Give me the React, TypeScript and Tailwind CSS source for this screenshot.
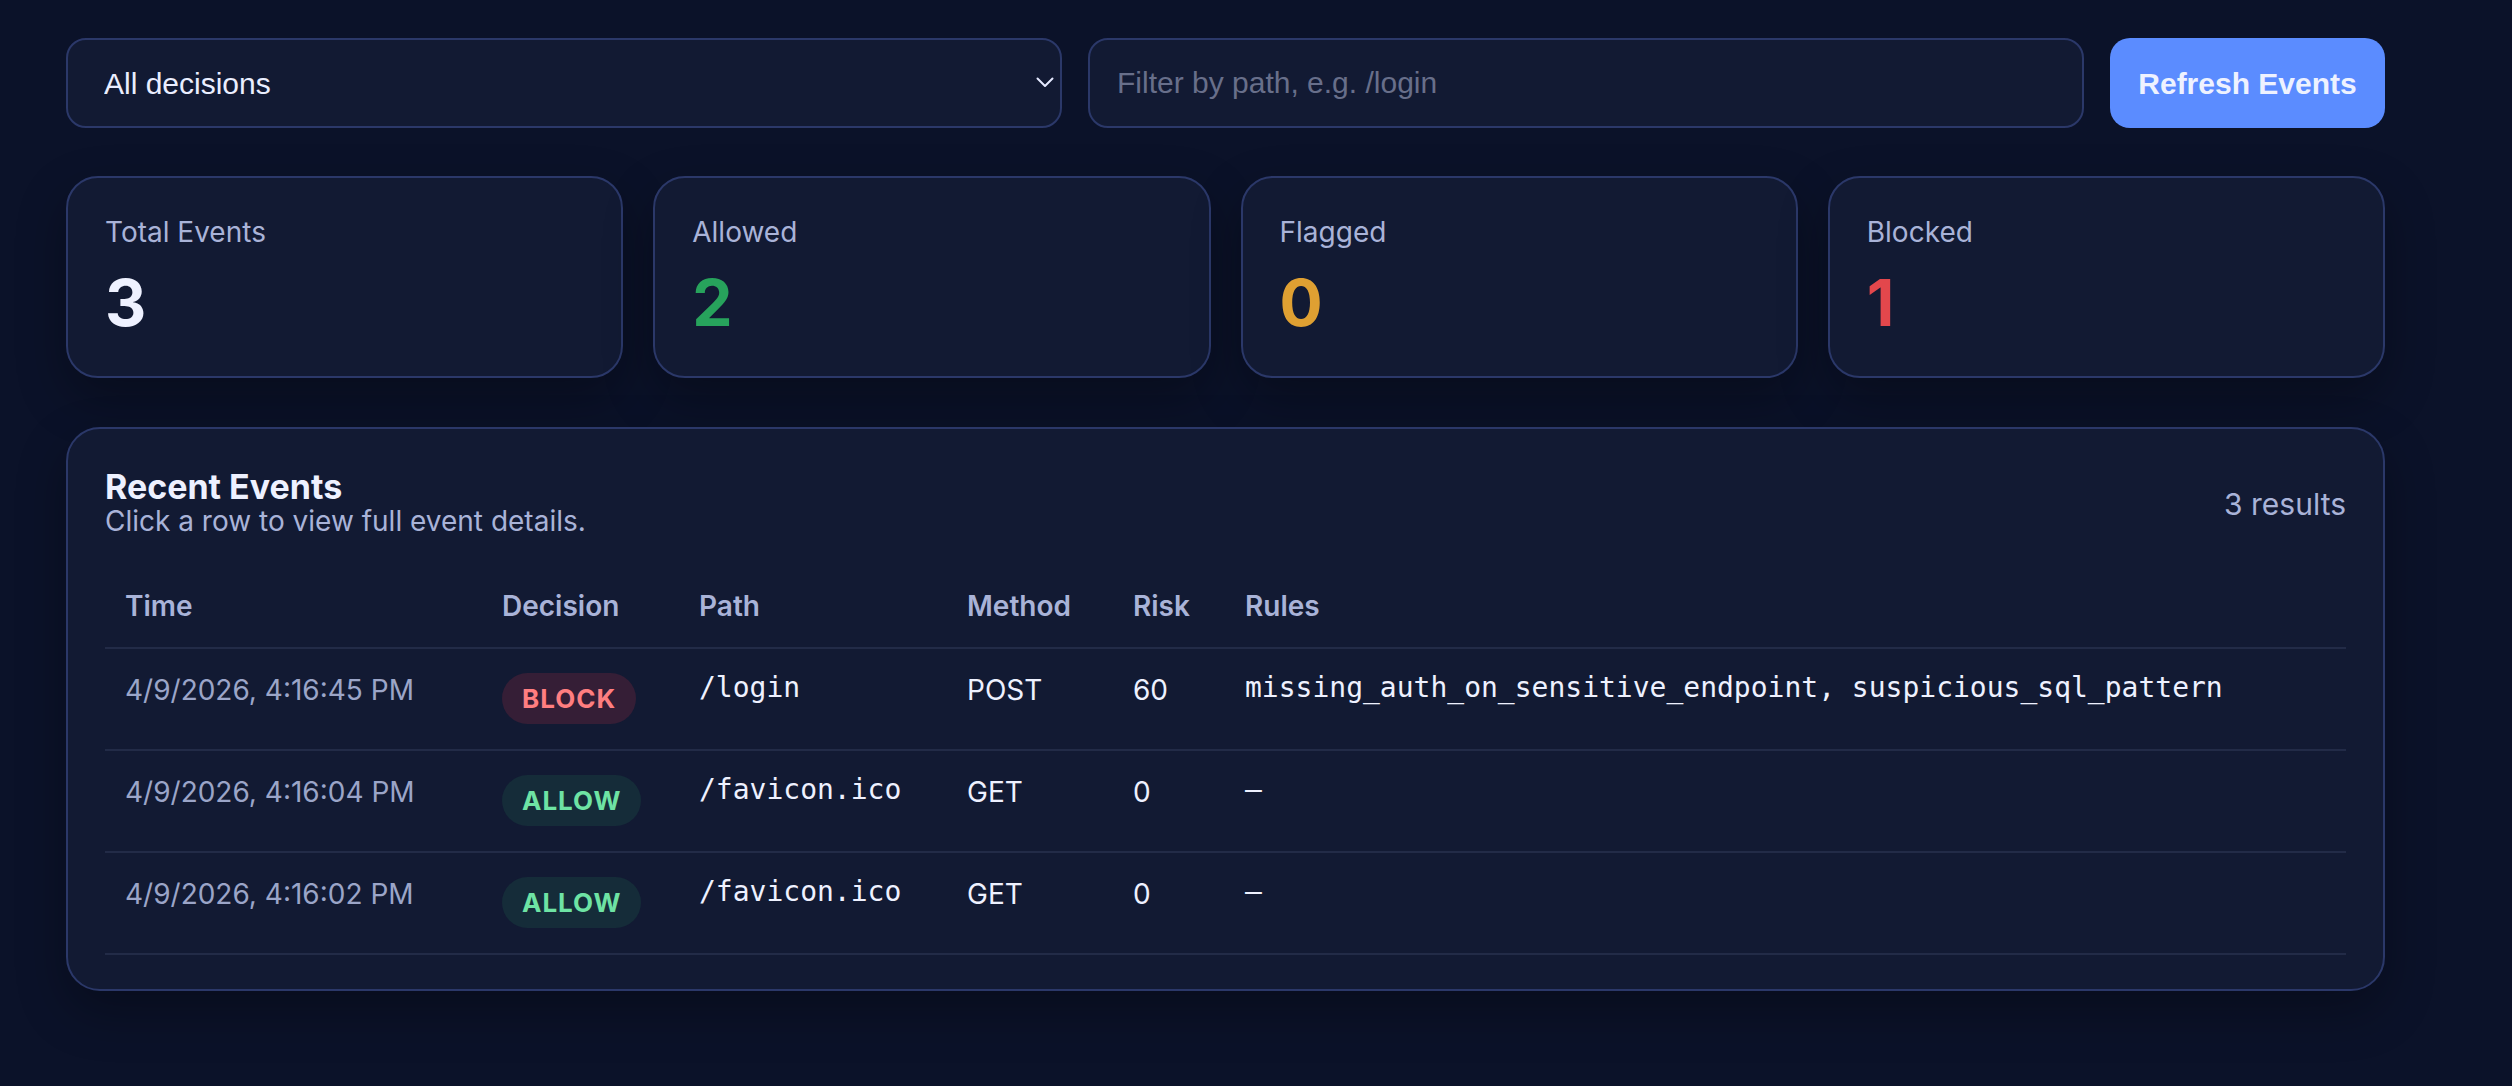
import { useState } from "react";

type Decision = "BLOCK" | "ALLOW" | "FLAG";

const events: {
  id: number;
  time: string;
  decision: Decision;
  path: string;
  method: string;
  risk: number;
  rules: string[];
}[] = [
  {
    id: 1,
    time: "4/9/2026, 4:16:45 PM",
    decision: "BLOCK",
    path: "/login",
    method: "POST",
    risk: 60,
    rules: ["missing_auth_on_sensitive_endpoint", "suspicious_sql_pattern"],
  },
  {
    id: 2,
    time: "4/9/2026, 4:16:04 PM",
    decision: "ALLOW",
    path: "/favicon.ico",
    method: "GET",
    risk: 0,
    rules: [],
  },
  {
    id: 3,
    time: "4/9/2026, 4:16:02 PM",
    decision: "ALLOW",
    path: "/favicon.ico",
    method: "GET",
    risk: 0,
    rules: [],
  },
];

const stats = [
  { label: "Total Events", value: 3, color: "text-[#eef1ff]" },
  { label: "Allowed", value: 2, color: "text-[#27a35c]" },
  { label: "Flagged", value: 0, color: "text-[#dfa032]" },
  { label: "Blocked", value: 1, color: "text-[#e3474c]" },
];

const badgeStyles: Record<Decision, string> = {
  BLOCK: "bg-[#351e36] text-[#ff7e80]",
  ALLOW: "bg-[#152c39] text-[#6ee3a4]",
  FLAG: "bg-[#33291c] text-[#f3c052]",
};

const mono = "font-['DejaVu_Sans_Mono',monospace]";

export default function App() {
  const [decision, setDecision] = useState("all");
  const [pathFilter, setPathFilter] = useState("");

  return (
    <div className="min-h-screen bg-[#0b1229] font-['Inter',sans-serif] text-[#eef1ff]">
      <div className="w-[2319px] ml-[66px] pt-[38px] pb-[60px] flex flex-col">
        {/* Filters */}
        <div className="flex gap-[26px]">
          <div className="relative w-[996px]">
            <select
              value={decision}
              onChange={(e) => setDecision(e.target.value)}
              className="appearance-none w-full h-[90px] rounded-[20px] border-2 border-[#2b3869] bg-[#121a33] pl-[36px] pr-[60px] text-[30px] text-[#eaeeff] font-['Liberation_Sans',Arial,sans-serif] outline-none"
            >
              <option value="all">All decisions</option>
              <option value="allow">Allow</option>
              <option value="flag">Flag</option>
              <option value="block">Block</option>
            </select>
            <svg
              className="pointer-events-none absolute right-[8px] top-[38px]"
              width="18"
              height="12"
              viewBox="0 0 18 12"
              fill="none"
            >
              <path d="M1.5 2.5l7.5 7.5 7.5-7.5" stroke="#e4e9ff" strokeWidth="2" strokeLinecap="round" strokeLinejoin="round" />
            </svg>
          </div>
          <input
            value={pathFilter}
            onChange={(e) => setPathFilter(e.target.value)}
            placeholder="Filter by path, e.g. /login"
            className="w-[996px] h-[90px] rounded-[20px] border-2 border-[#2b3869] bg-[#121a33] px-[27px] text-[30px] text-[#eaeeff] placeholder:text-[#686f8a] font-['Liberation_Sans',Arial,sans-serif] outline-none"
          />
          <button className="w-[275px] h-[90px] rounded-[20px] bg-[#5b8cff] text-[30px] font-bold text-[#eef2ff] font-['Liberation_Sans',Arial,sans-serif]">
            Refresh Events
          </button>
        </div>

        {/* Stat cards */}
        <div className="mt-[48px] grid grid-cols-4 gap-[30px]">
          {stats.map((s) => (
            <div
              key={s.label}
              className="h-[202px] rounded-[32px] border-2 border-[#2b3869] bg-[#121a33] px-[37px] pt-[33px] shadow-[0_20px_50px_rgba(0,0,0,0.3)]"
            >
              <div className="text-[28px] leading-[42px] text-[#a9b3d8]">{s.label}</div>
              <div className={`mt-[18px] text-[64px] leading-[64px] font-bold ${s.color}`}>{s.value}</div>
            </div>
          ))}
        </div>

        {/* Recent events */}
        <div className="mt-[49px] rounded-[34px] border-2 border-[#2b3869] bg-[#121a33] px-[37px] pt-[41px] pb-[34px] shadow-[0_20px_50px_rgba(0,0,0,0.3)]">
          <div className="flex items-center justify-between">
            <div>
              <h2 className="text-[34px] leading-[34px] font-bold text-[#eef1ff]">Recent Events</h2>
              <p className="text-[28px] leading-[34px] text-[#a9b3d8]">Click a row to view full event details.</p>
            </div>
            <div className="text-[30px] text-[#a9b3d8]">{events.length} results</div>
          </div>

          <table className="mt-[27px] w-full table-fixed border-collapse text-left">
            <thead>
              <tr className="border-b-2 border-[#222b47]">
                <th className="w-[377px] px-[20px] py-[20px] text-[28px] leading-[42px] font-semibold text-[#a9b3d8]">Time</th>
                <th className="w-[197px] px-[20px] py-[20px] text-[28px] leading-[42px] font-semibold text-[#a9b3d8]">Decision</th>
                <th className="w-[268px] px-[20px] py-[20px] text-[28px] leading-[42px] font-semibold text-[#a9b3d8]">Path</th>
                <th className="w-[166px] px-[20px] py-[20px] text-[28px] leading-[42px] font-semibold text-[#a9b3d8]">Method</th>
                <th className="w-[112px] px-[20px] py-[20px] text-[28px] leading-[42px] font-semibold text-[#a9b3d8]">Risk</th>
                <th className="px-[20px] py-[20px] text-[28px] leading-[42px] font-semibold text-[#a9b3d8]">Rules</th>
              </tr>
            </thead>
            <tbody>
              {events.map((ev) => (
                <tr key={ev.id} className="border-b-2 border-[#222b47] cursor-pointer align-top">
                  <td className="px-[20px] pt-[20px] pb-[25px] text-[28px] leading-[42px] text-[#9ba5c8]">{ev.time}</td>
                  <td className="px-[20px] pt-[20px] pb-[25px]">
                    <span
                      className={`mt-[4px] inline-flex h-[51px] items-center rounded-full px-[20px] text-[26px] font-bold tracking-[1px] ${badgeStyles[ev.decision]}`}
                    >
                      {ev.decision}
                    </span>
                  </td>
                  <td className={`px-[20px] pt-[18px] pb-[25px] text-[28px] leading-[42px] text-[#eef1ff] ${mono}`}>{ev.path}</td>
                  <td className="px-[20px] pt-[20px] pb-[25px] text-[28px] leading-[42px] text-[#eef1ff]">{ev.method}</td>
                  <td className="px-[20px] pt-[20px] pb-[25px] text-[28px] leading-[42px] text-[#eef1ff]">{ev.risk}</td>
                  <td className={`px-[20px] pt-[18px] pb-[25px] text-[28px] leading-[42px] text-[#eef1ff] ${mono}`}>
                    {ev.rules.length ? ev.rules.join(", ") : "—"}
                  </td>
                </tr>
              ))}
            </tbody>
          </table>
        </div>
      </div>
    </div>
  );
}
